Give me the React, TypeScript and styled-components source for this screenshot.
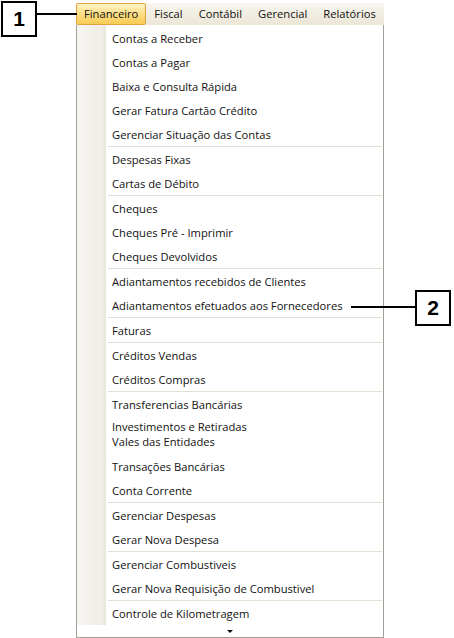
import React from "react"
import styled, { createGlobalStyle } from "styled-components"

const GlobalStyle = createGlobalStyle`
  html, body {
    margin: 0;
    padding: 0;
    background: #fff;
  }
  body {
    width: 454px;
    height: 638px;
    overflow: hidden;
    font-family: "Open Sans", "Noto Sans", sans-serif;
  }
`

const Page = styled.div`
  position: relative;
  width: 454px;
  height: 638px;
  padding: 3px 0 0 76px;
  box-sizing: border-box;
`

const MenuColumn = styled.div`
  width: 308px;
  display: flex;
  flex-direction: column;
`

const MenuBar = styled.div`
  display: flex;
  height: 22px;
  background: linear-gradient(#f7f5ee, #ebe6d6);
`

const BarItem = styled.div<{ $active?: boolean }>`
  display: flex;
  align-items: center;
  padding: 0 7px 1px;
  font-size: 11.2px;
  color: #111;
  box-sizing: border-box;
  border: 1px solid ${({ $active }) => ($active ? "#e3a23f" : "transparent")};
  border-radius: 2px;
  background: ${({ $active }) =>
    $active ? "linear-gradient(#fff4c8, #fcdf8a 45%, #f9cb55)" : "transparent"};
`

const Dropdown = styled.div`
  border: 1px solid #a39e96;
  border-top: none;
  display: flex;
  flex-direction: column;
  background: #fff;
`

const List = styled.div`
  padding-top: 1px;
  background: linear-gradient(to right, #f6f5f1 0, #f1eee7 24px, #e9e5da 29px, #fff 29px);
  display: flex;
  flex-direction: column;
`

const Item = styled.div<{ $tall?: boolean }>`
  height: ${({ $tall }) => ($tall ? "38px" : "24px")};
  padding: ${({ $tall }) => ($tall ? "3px 0 5px 35px" : "0 0 0 35px")};
  box-sizing: border-box;
  display: flex;
  flex-direction: column;
  justify-content: ${({ $tall }) => ($tall ? "flex-start" : "center")};
  font-size: 11.2px;
  line-height: 15px;
  color: #111;
  white-space: nowrap;
`

const Separator = styled.div`
  height: 1px;
  margin: 0 1px 0 31px;
  background: #e3dfd5;
`

const MoreStrip = styled.div`
  height: 12px;
  display: flex;
  align-items: center;
  justify-content: center;
  padding-top: 1px;
  box-sizing: border-box;
`

const DownArrow = styled.div`
  width: 0;
  height: 0;
  border-left: 3px solid transparent;
  border-right: 3px solid transparent;
  border-top: 3px solid #111;
`

const Callout = styled.div<{ $x: number; $y: number }>`
  position: absolute;
  left: ${({ $x }) => $x}px;
  top: ${({ $y }) => $y}px;
  width: 36px;
  height: 36px;
  box-sizing: border-box;
  border: 2px solid #000;
  background: #fff;
  display: flex;
  align-items: center;
  justify-content: center;
  font-family: "Liberation Sans", Arial, sans-serif;
  font-weight: bold;
  font-size: 21px;
  color: #000;
`

const Leader = styled.div<{ $x: number; $y: number; $w: number }>`
  position: absolute;
  left: ${({ $x }) => $x}px;
  top: ${({ $y }) => $y}px;
  width: ${({ $w }) => $w}px;
  height: 2px;
  background: #000;
`

type Entry = string | string[] | null

const groups: Entry[] = [
  "Contas a Receber",
  "Contas a Pagar",
  "Baixa e Consulta Rápida",
  "Gerar Fatura Cartão Crédito",
  "Gerenciar Situação das Contas",
  null,
  "Despesas Fixas",
  "Cartas de Débito",
  null,
  "Cheques",
  "Cheques Pré - Imprimir",
  "Cheques Devolvidos",
  null,
  "Adiantamentos recebidos de Clientes",
  "Adiantamentos efetuados aos Fornecedores",
  null,
  "Faturas",
  null,
  "Créditos Vendas",
  "Créditos Compras",
  null,
  "Transferencias Bancárias",
  ["Investimentos e Retiradas", "Vales das Entidades"],
  "Transações Bancárias",
  "Conta Corrente",
  null,
  "Gerenciar Despesas",
  "Gerar Nova Despesa",
  null,
  "Gerenciar Combustiveis",
  "Gerar Nova Requisição de Combustivel",
  null,
  "Controle de Kilometragem",
]

const menus = ["Financeiro", "Fiscal", "Contábil", "Gerencial", "Relatórios"]

export default function App() {
  return (
    <>
      <GlobalStyle />
      <Page>
        <MenuColumn>
          <MenuBar>
            {menus.map((m, i) => (
              <BarItem key={m} $active={i === 0}>
                {m}
              </BarItem>
            ))}
          </MenuBar>
          <Dropdown>
            <List>
              {groups.map((g, i) =>
                g === null ? (
                  <Separator key={i} />
                ) : Array.isArray(g) ? (
                  <Item key={i} $tall>
                    {g.map((line) => (
                      <span key={line}>{line}</span>
                    ))}
                  </Item>
                ) : (
                  <Item key={i}>{g}</Item>
                )
              )}
            </List>
            <MoreStrip>
              <DownArrow />
            </MoreStrip>
          </Dropdown>
        </MenuColumn>

        <Callout $x={1} $y={1}>1</Callout>
        <Leader $x={37} $y={13} $w={40} />
        <Callout $x={415} $y={290}>2</Callout>
        <Leader $x={351} $y={306} $w={64} />
      </Page>
    </>
  )
}
